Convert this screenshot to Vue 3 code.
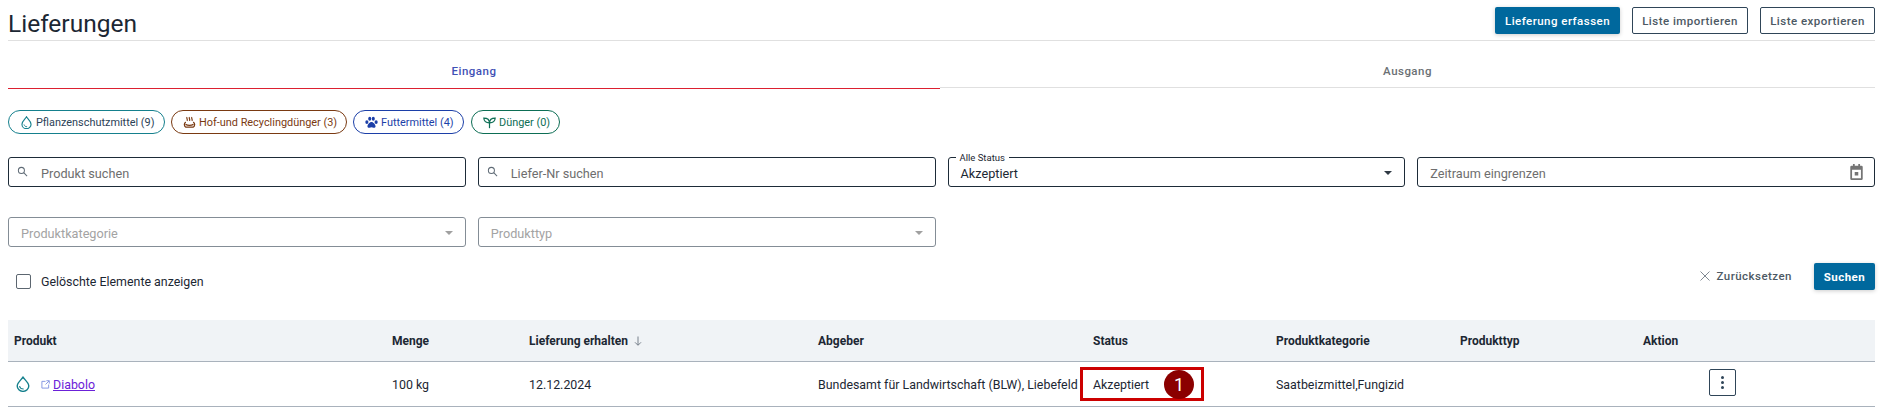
<script setup>
const chips = [
  { label: 'Pflanzenschutzmittel (9)', cls: 'teal', icon: 'drop' },
  { label: 'Hof-und Recyclingdünger (3)', cls: 'brown', icon: 'manure' },
  { label: 'Futtermittel (4)', cls: 'blue', icon: 'paw' },
  { label: 'Dünger (0)', cls: 'green', icon: 'sprout' }
]
const heads = ['Produkt', 'Menge', 'Lieferung erhalten', 'Abgeber', 'Status', 'Produktkategorie', 'Produkttyp', 'Aktion']
</script>

<template>
  <div class="page">
    <header class="top">
      <h1>Lieferungen</h1>
      <div class="actions">
        <button class="btn primary wide">Lieferung erfassen</button>
        <button class="btn outline">Liste importieren</button>
        <button class="btn outline last">Liste exportieren</button>
      </div>
    </header>

    <nav class="tabs">
      <div class="tab active">Eingang</div>
      <div class="tab">Ausgang</div>
    </nav>

    <div class="chips">
      <div v-for="c in chips" :key="c.label" class="chip" :class="c.cls">
        <svg v-if="c.icon === 'drop'" class="ci" viewBox="0 0 16 16" fill="none" stroke="#15808d" stroke-width="1.4"><path d="M8 .9C6.200 3.800 2.400 6.500 2.400 10a5.600 5.600 0 0 0 11.200 0C13.600 6.500 9.800 3.800 8 .9Z"/><path d="M4.900 10.400c.5 1.900 1.800 2.900 3.900 2.800" stroke-width="1.100"/></svg>
        <svg v-else-if="c.icon === 'manure'" class="ci" viewBox="0 0 16 16" fill="none" stroke="#7a3a12" stroke-width="1.500"><path d="M5 1.500c-1.300 1.500 1.200 2.500 0 4.500M8 1.500c-1.300 1.500 1.200 2.500 0 4.500M11 1.500c-1.300 1.500 1.200 2.500 0 4.500"/><path d="M3.500 7.500C1 8.500 1 12.500 3.500 13.800h9c2.500-1.300 2.500-5.300 0-6.300"/><path d="M3 10.300c3 1.500 7 1.500 10 0"/></svg>
        <svg v-else-if="c.icon === 'paw'" class="ci" viewBox="0 0 16 16" fill="#1c3fa8"><ellipse cx="2.300" cy="7.400" rx="1.900" ry="2.300"/><ellipse cx="5.800" cy="3.400" rx="1.900" ry="2.500"/><ellipse cx="10.200" cy="3.400" rx="1.900" ry="2.500"/><ellipse cx="13.700" cy="7.400" rx="1.900" ry="2.300"/><path d="M8 7.300c-2.400 0-5 3.200-5 5.300 0 1.500 1.400 2.100 2.500 1.900.9-.2 1.600-.6 2.500-.6s1.600.4 2.500.6c1.100.2 2.500-.4 2.500-1.900 0-2.100-2.600-5.300-5-5.300Z"/></svg>
        <svg v-else class="ci" viewBox="0 0 16 16" fill="none" stroke="#0d6e55" stroke-width="1.500"><path d="M8 15V7.500"/><path d="M8 8.500C4 8.500 1.200 6.500 1 2.500c4 0 7 2 7 6Z"/><path d="M8 8.500c0-4 3-6 7-6-.2 4-3 6-7 6Z"/></svg>
        <span>{{ c.label }}</span>
      </div>
    </div>

    <div class="filters">
      <div class="field strong">
        <svg class="search" viewBox="0 0 12 12" fill="none" stroke="#5f6b76" stroke-width="1.100"><circle cx="4.800" cy="4.800" r="3.300"/><path d="M7.300 7.300 11 11"/></svg>
        <span class="ph inset">Produkt suchen</span>
      </div>
      <div class="field strong">
        <svg class="search" viewBox="0 0 12 12" fill="none" stroke="#5f6b76" stroke-width="1.100"><circle cx="4.800" cy="4.800" r="3.300"/><path d="M7.300 7.300 11 11"/></svg>
        <span class="ph inset">Liefer-Nr suchen</span>
      </div>
      <div class="field strong select">
        <span class="legend">Alle Status</span>
        <span class="value">Akzeptiert</span>
        <span class="caret dark"></span>
      </div>
      <div class="field strong date">
        <span class="ph">Zeitraum eingrenzen</span>
        <svg class="cal" viewBox="0 0 16 18" fill="#757575"><path d="M4 0h2v2h4V0h2v2h1.500A1.500 1.500 0 0 1 15 3.500v13a1.500 1.500 0 0 1-1.500 1.500h-11A1.500 1.500 0 0 1 1 16.500v-13A1.500 1.500 0 0 1 2.500 2H4V0Zm-1 6.500V16h10V6.500H3Zm3 2.500h4v4H6V9Z" fill-rule="evenodd"/></svg>
      </div>
      <div class="field muted select">
        <span class="ph light">Produktkategorie</span>
        <span class="caret"></span>
      </div>
      <div class="field muted select">
        <span class="ph light">Produkttyp</span>
        <span class="caret"></span>
      </div>
    </div>

    <div class="bar">
      <label class="check"><span class="box"></span><span>Gelöschte Elemente anzeigen</span></label>
      <div class="bar-actions">
        <button class="reset">
          <svg viewBox="0 0 10 10" fill="none" stroke="#5f6b76" stroke-width="0.800"><path d="M.5.500l9 9M9.500.500l-9 9"/></svg>
          Zurücksetzen
        </button>
        <button class="btn primary search-btn">Suchen</button>
      </div>
    </div>

    <table>
      <colgroup>
        <col class="c1"/><col class="c2"/><col class="c3"/><col class="c4"/>
        <col class="c5"/><col class="c6"/><col class="c7"/><col/>
      </colgroup>
      <thead>
        <tr>
          <th v-for="h in heads" :key="h">{{ h }}<span v-if="h === 'Lieferung erhalten'" class="sort">
            <svg viewBox="0 0 8 10" fill="none" stroke="#6a7480" stroke-width="0.900"><path d="M4 .5v8.500M1 6.300 4 9.300l3-3"/></svg></span></th>
        </tr>
      </thead>
      <tbody>
        <tr>
          <td>
            <div class="product">
              <svg class="rowdrop" viewBox="0 0 16 18" fill="none" stroke="#15808d" stroke-width="1.600"><path d="M8 1.200C6 4.300 1.400 7.300 1.400 11.200a6.600 6.200 0 0 0 13.200 0C14.600 7.300 10 4.300 8 1.200Z"/><path d="M4 11.500c.6 2.300 2.200 3.400 4.800 3.300" stroke-width="1.200"/></svg>
              <svg class="ext" viewBox="0 0 10 10" fill="none" stroke="#7d8fe0" stroke-width="1"><path d="M5 1.500H1v7.500h7.500V5M6 .8h3.200V4M9 1 5 5"/></svg>
              <a href="#" @click.prevent>Diabolo</a>
            </div>
          </td>
          <td>100 kg</td>
          <td>12.12.2024</td>
          <td class="nowrap">Bundesamt für Landwirtschaft (BLW), Liebefeld</td>
          <td class="status">Akzeptiert
            <div class="mark"><span>1</span></div>
          </td>
          <td>Saatbeizmittel,Fungizid</td>
          <td></td>
          <td>
            <button class="more" aria-label="Mehr"><i></i><i></i><i></i></button>
          </td>
        </tr>
      </tbody>
    </table>
  </div>
</template>

<style>
html, body { margin: 0; background: #fff; }
</style>

<style scoped>
.page {
  box-sizing: border-box;
  width: 1890px;
  height: 411px;
  padding: 0 15px 0 8px;
  font-family: Roboto, "Liberation Sans", sans-serif;
  font-size: 12.4px;
  color: #1c2733;
  overflow: hidden;
}
.top {
  display: flex;
  justify-content: space-between;
  align-items: flex-start;
  height: 40px;
  border-bottom: 1px solid #e0e0e0;
}
h1 {
  margin: 0;
  font-size: 24.5px;
  font-weight: 400;
  line-height: 34px;
  padding-top: 7px;
  color: #1c2733;
}
.actions { display: flex; gap: 12px; padding-top: 7px; }
.btn {
  font-family: inherit;
  font-size: 11.5px;
  font-weight: 500;
  letter-spacing: 0.47px;
  height: 27px;
  border-radius: 2px;
  padding: 0;
  cursor: pointer;
}
.primary {
  background: #00689d;
  color: #fff;
  border: 0;
  box-shadow: 0 1px 4px rgba(0, 0, 0, .2);
}
.wide { width: 125px; }
.outline {
  width: 116px;
  background: #fff;
  color: #4d5964;
  border: 1px solid #2f4558;
}
.outline.last { width: 115px; }
.tabs { display: flex; height: 47px; }
.tab {
  flex: 1;
  display: flex;
  align-items: center;
  justify-content: center;
  font-size: 11.5px;
  font-weight: 500;
  letter-spacing: 0.47px;
  color: #6b7074;
  border-bottom: 1px solid #e0e0e0;
  box-sizing: border-box;
  padding-top: 13px;
}
.tab.active {
  flex: 0 0 932px;
  color: #3f51b5;
  border-bottom: 1px solid #dc2030;
  margin-bottom: -1px;
}
.chips { display: flex; gap: 6px; margin-top: 22px; }
.chip {
  display: flex;
  align-items: center;
  box-sizing: border-box;
  height: 24px;
  border: 1px solid;
  border-radius: 12px;
  padding: 0 0 0 11px;
  gap: 3px;
  font-size: 10.9px;
  white-space: nowrap;
}
.chip span { padding-top: 1px; }
.ci { width: 13px; height: 13px; flex: none; }
.teal { border-color: #15808d; color: #2c4257; width: 157px; }
.brown { border-color: #7a3a12; color: #7a3a12; width: 176px; }
.blue { border-color: #1c3fa8; color: #1c3fa8; width: 111px; margin-right: 1px; }
.green { border-color: #0d6e55; color: #0d6e55; width: 89px; }
.filters {
  display: grid;
  grid-template-columns: repeat(4, 1fr);
  column-gap: 12px;
  row-gap: 30px;
  margin-top: 23px;
}
.field {
  box-sizing: border-box;
  height: 30px;
  border-radius: 3px;
  display: flex;
  align-items: center;
  position: relative;
  padding: 2px 12px 0;
  font-size: 12.7px;
  background: #fff;
}
.strong { border: 1px solid #1d2b38; }
.muted { border: 1px solid #848d96; grid-row: 2; }
.search { width: 11px; height: 11px; flex: none; margin: -3px 0 0 -4px; }
.ph { color: #6e6e6e; }
.inset { margin-left: 13px; }
.light { color: #a3a3a3; }
.value { color: #1c2733; }
.select { justify-content: space-between; }
.caret {
  width: 0; height: 0;
  border-left: 4px solid transparent;
  border-right: 4px solid transparent;
  border-top: 4px solid #a0a0a0;
}
.caret.dark { border-top-color: #303a44; }
.legend {
  position: absolute;
  top: -6px;
  left: 7px;
  padding: 0 4px;
  background: #fff;
  font-size: 9.5px;
  line-height: 11px;
  color: #1c2733;
}
.date { justify-content: space-between; }
.cal { width: 15px; height: 16px; margin: -2px -2px 0 0; }
.bar {
  display: flex;
  justify-content: space-between;
  align-items: center;
  margin-top: 16px;
  height: 27px;
}
.check { display: flex; align-items: center; gap: 10px; padding: 10px 0 0 8px; font-size: 12.4px; }
.box {
  width: 13px; height: 13px;
  border: 1px solid #5c6670;
  border-radius: 2px;
  display: block;
}
.bar-actions { display: flex; align-items: center; gap: 22px; }
.reset {
  display: flex;
  align-items: center;
  gap: 7px;
  border: 0;
  background: none;
  padding: 0 0 2px;
  font-family: inherit;
  font-size: 11.5px;
  font-weight: 500;
  letter-spacing: 0.47px;
  color: #4d5964;
}
.reset svg { width: 10px; height: 10px; }
.search-btn { width: 61px; font-weight: 700; }
table {
  border-collapse: collapse;
  table-layout: fixed;
  width: 100%;
  margin-top: 30px;
}
.c1 { width: 378px; }
.c2 { width: 137px; }
.c3 { width: 289px; }
.c4 { width: 275px; }
.c5 { width: 183px; }
.c6 { width: 184px; }
.c7 { width: 183px; }
th {
  background: #f0f3f6;
  height: 41px;
  padding: 0 6px;
  text-align: left;
  font-size: 12px;
  font-weight: 700;
  color: #1c2733;
  border-bottom: 1px solid #a9b2bc;
  white-space: nowrap;
}
.sort svg { width: 8px; height: 10px; margin-left: 6px; vertical-align: -1px; }
td {
  height: 45px;
  padding: 0 6px;
  font-size: 12.4px;
  border-bottom: 1px solid #a9b2bc;
  color: #1c2733;
  box-sizing: border-box;
}
.nowrap { white-space: nowrap; }
.status { position: relative; overflow: visible; }
.mark {
  position: absolute;
  left: -7px;
  top: 5px;
  box-sizing: border-box;
  width: 124px;
  height: 34px;
  border: 3px solid #cc0000;
}
.mark span {
  position: absolute;
  left: 81px;
  top: 0;
  width: 30px;
  height: 29px;
  border-radius: 50%;
  background: #8b0000;
  color: #fff;
  font-size: 18px;
  text-align: center;
  line-height: 29px;
}
.product { display: flex; align-items: center; }
.rowdrop { width: 14px; height: 16px; margin-left: 2px; flex: none; }
.ext { width: 9px; height: 9px; margin-left: 11px; margin-right: 3px; flex: none; }
a { color: #6b21d8; text-decoration: underline; font-size: 12.4px; }
.more {
  display: flex;
  flex-direction: column;
  align-items: center;
  justify-content: center;
  gap: 2px;
  width: 27px;
  height: 27px;
  margin: 0 0 3px 66px;
  padding: 0;
  background: #fff;
  border: 1px solid #2f4558;
  border-radius: 2px;
}
.more i { width: 3px; height: 3px; border-radius: 50%; background: #2f4558; display: block; }
</style>
